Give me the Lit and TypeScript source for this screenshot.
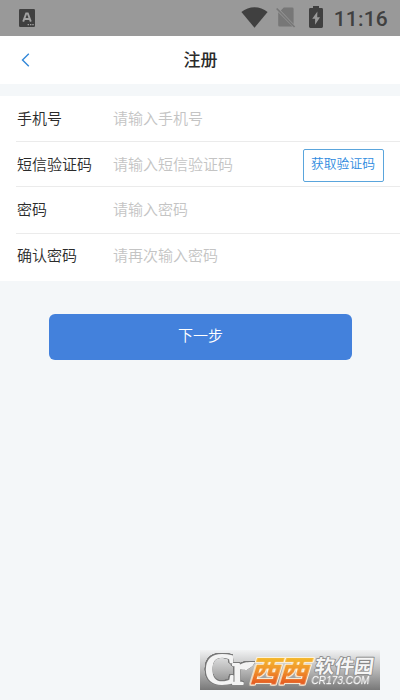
import { LitElement, html, svg, css } from 'lit';
import { customElement } from 'lit/decorators.js';

interface Field {
  id: string;
  label: string;
  placeholder: string;
  type: string;
  code?: boolean;
}

const FIELDS: Field[] = [
  { id: 'phone', label: '手机号', placeholder: '请输入手机号', type: 'tel' },
  { id: 'sms', label: '短信验证码', placeholder: '请输入短信验证码', type: 'text', code: true },
  { id: 'password', label: '密码', placeholder: '请输入密码', type: 'password' },
  { id: 'confirm', label: '确认密码', placeholder: '请再次输入密码', type: 'password' },
];

@customElement('status-bar')
export class StatusBar extends LitElement {
  static styles = css`
    :host {
      display: flex;
      align-items: center;
      height: 36px;
      box-sizing: border-box;
      padding: 0 12px 1px 19px;
      background: #999;
      color: #404040;
      font-family: Roboto, sans-serif;
    }
    svg {
      display: block;
      flex: none;
    }
    .spacer {
      flex: 1;
    }
    .wifi {
      margin-right: 8px;
    }
    .sim {
      margin-right: 13px;
    }
    .battery {
      margin: 0 11px 1px 0;
    }
    .time {
      font-size: 21px;
      line-height: 34px;
      font-weight: 500;
      padding-top: 3px;
      letter-spacing: 0.2px;
    }
  `;

  render() {
    return html`
      <svg class="app" width="16" height="18" viewBox="0 0 16 18">
        <rect width="16" height="18" rx="1.2" fill="#404040" />
        <path d="M4.2 12.6 7.2 4.4h1.6l3 8.2M5.6 10h4.8" fill="none" stroke="#a2a2a2" stroke-width="1.9" />
        <path d="M8.6 15.7h1.4M11 15.7h1.4M13.3 15.7h1.4" stroke="#a2a2a2" stroke-width="1.2" />
      </svg>
      <div class="spacer"></div>
      <svg class="wifi" width="27" height="21" viewBox="0 0 27 21">
        <path d="M.4 5C8-1.5 19-1.5 26.6 5L13.5 20.8z" fill="#404040" />
      </svg>
      <svg class="sim" width="20" height="21" viewBox="0 0 20 21">
        <path d="M7.8.5h8.4q1.4 0 1.4 1.4v15L4.8 3.6zM2.2 5.2 16.5 19.6H3.6q-1.4 0-1.4-1.4z" fill="#777" />
        <path d="M.7 1.5 18.6 20" stroke="#777" stroke-width="1.7" />
      </svg>
      <svg class="battery" width="14" height="22" viewBox="0 0 14 22">
        <path d="M4 0h6v2h2.6Q14 2 14 3.4v17.2q0 1.4-1.4 1.4H1.4Q0 22 0 20.6V3.4Q0 2 1.4 2H4z" fill="#404040" />
        <path d="M8.4 5.5 3.2 12.8h2.9v6L11 11.3H8.2z" fill="#999" />
      </svg>
      <div class="time">11:16</div>
    `;
  }
}

@customElement('site-mark')
export class SiteMark extends LitElement {
  static styles = css`
    :host {
      display: block;
      width: 180px;
      height: 40px;
    }
    svg {
      display: block;
      overflow: visible;
    }
    text {
      stroke-linejoin: round;
    }
    .serif {
      font: 400 45px 'Liberation Serif', serif;
      fill: #f3f3f3;
      stroke: #f3f3f3;
      stroke-width: 2px;
    }
    .edge {
      filter: drop-shadow(0.5px 0 0 #777) drop-shadow(-0.5px 0 0 #777) drop-shadow(0 0.5px 0 #777)
        drop-shadow(0 -0.5px 0 #777);
    }
    .tile {
      font: 900 28px 'Noto Sans CJK SC', sans-serif;
      fill: url(#flame);
      filter: drop-shadow(1px 0 0 #fff3dd) drop-shadow(-1px 0 0 #fff3dd) drop-shadow(0 1px 0 #fff3dd)
        drop-shadow(0 -1px 0 #fff3dd);
    }
    .name {
      font: 700 19px 'Noto Sans CJK SC', sans-serif;
      fill: #f6f6f6;
      stroke: #888;
      stroke-width: 1.6px;
      paint-order: stroke;
    }
    .domain {
      font: 400 11px 'Liberation Sans', sans-serif;
      fill: #fff;
      stroke: #fff;
      stroke-width: 0.3px;
      filter: drop-shadow(0 0 0.6px #555);
    }
  `;

  render() {
    const tile = (x: number) => svg`
      <text class="tile" transform="translate(${x} 31) skewX(-17)" textLength="30" lengthAdjust="spacingAndGlyphs">西</text>
    `;
    return html`
      <svg width="180" height="40" viewBox="0 0 180 40">
        <defs>
          <linearGradient id="plate" x1="0" y1="0" x2="0" y2="1">
            <stop offset="0" stop-color="#f1f2f3" />
            <stop offset="0.5" stop-color="#b8b8b8" />
            <stop offset="1" stop-color="#787878" />
          </linearGradient>
          <linearGradient id="flame" gradientUnits="userSpaceOnUse" x1="0" y1="-23" x2="0" y2="3">
            <stop offset="0" stop-color="#f4b72c" />
            <stop offset="0.5" stop-color="#f0902a" />
            <stop offset="1" stop-color="#e45a22" />
          </linearGradient>
        </defs>
        <rect width="180" height="40" fill="url(#plate)" />
        <g class="edge">
          <text class="serif" x="5" y="34" textLength="42" lengthAdjust="spacing">Cr</text>
          <path d="M39 18c3-6 9-6 16-6-3 7-10 9-16 7z" fill="#f3f3f3" />
        </g>
        ${tile(49)} ${tile(78)}
        <text class="name" transform="translate(114 23) skewX(-8)" textLength="59" lengthAdjust="spacingAndGlyphs">软件园</text>
        <text class="domain" transform="translate(111 34) skewX(-8)" textLength="58" lengthAdjust="spacingAndGlyphs">CR173.COM</text>
      </svg>
    `;
  }
}

@customElement('app-root')
export class AppRoot extends LitElement {
  static styles = css`
    :host {
      display: block;
      position: relative;
      height: 700px;
      overflow: hidden;
      background: #f4f7f9;
      color: #2b2b2b;
      font-family: 'Noto Sans CJK SC', sans-serif;
    }
    .header {
      display: grid;
      grid-template-columns: 50px 1fr 49px;
      align-items: center;
      height: 48px;
      margin-bottom: 12px;
      background: #fff;
    }
    .back {
      display: flex;
      padding: 0 0 0 21px;
      border: none;
      background: none;
    }
    h1 {
      margin: 0;
      padding-bottom: 2px;
      font-size: 17px;
      line-height: 46px;
      font-weight: 500;
      text-align: center;
    }
    .form {
      display: grid;
      grid-template-rows: 46px 45px 47px 47px;
      padding-left: 16px;
      background: #fff;
    }
    .row {
      display: flex;
      align-items: center;
      box-sizing: border-box;
      padding: 0 16px 2px 0;
      border-bottom: 1px solid #ebebeb;
    }
    .row:nth-child(2) {
      padding-bottom: 0;
    }
    .row:last-child {
      padding-bottom: 4px;
      border-bottom-color: transparent;
    }
    label {
      width: 97px;
      padding-left: 1px;
      box-sizing: border-box;
      font-size: 15px;
      line-height: 22px;
      font-weight: 350;
      flex: none;
    }
    input {
      flex: 1;
      min-width: 0;
      height: 22px;
      padding: 0;
      border: none;
      outline: none;
      background: none;
      font: 350 15px/22px 'Noto Sans CJK SC', sans-serif;
    }
    input::placeholder {
      color: #c4c4c4;
      opacity: 1;
    }
    .code {
      flex: none;
      width: 81px;
      height: 33px;
      margin-top: 2px;
      padding: 0 1px 5px 0;
      border: 1px solid #5aa5dc;
      border-radius: 2px;
      background: #fff;
      color: #2f8be0;
      font: 350 12.8px 'Noto Sans CJK SC', sans-serif;
    }
    .next {
      display: block;
      width: 303px;
      height: 46px;
      margin: 33px 0 0 49px;
      padding: 0 0 5px;
      border: none;
      border-radius: 6px;
      background: #4381dc;
      color: #fff;
      font: 350 15px 'Noto Sans CJK SC', sans-serif;
    }
    site-mark {
      position: absolute;
      right: 20px;
      bottom: 10px;
    }
  `;

  render() {
    return html`
      <status-bar></status-bar>
      <div class="header">
        <button class="back" aria-label="返回">
          <svg width="9" height="14" viewBox="0 0 9 14">
            <path d="M7.8.7 1.5 7l6.3 6.3" fill="none" stroke="#3388d8" stroke-width="1.4" />
          </svg>
        </button>
        <h1>注册</h1>
      </div>
      <div class="form">
        ${FIELDS.map(
          (field) => html`
            <div class="row">
              <label for=${field.id}>${field.label}</label>
              <input id=${field.id} type=${field.type} placeholder=${field.placeholder} />
              ${field.code ? html`<button class="code">获取验证码</button>` : null}
            </div>
          `
        )}
      </div>
      <button class="next">下一步</button>
      <site-mark></site-mark>
    `;
  }
}
